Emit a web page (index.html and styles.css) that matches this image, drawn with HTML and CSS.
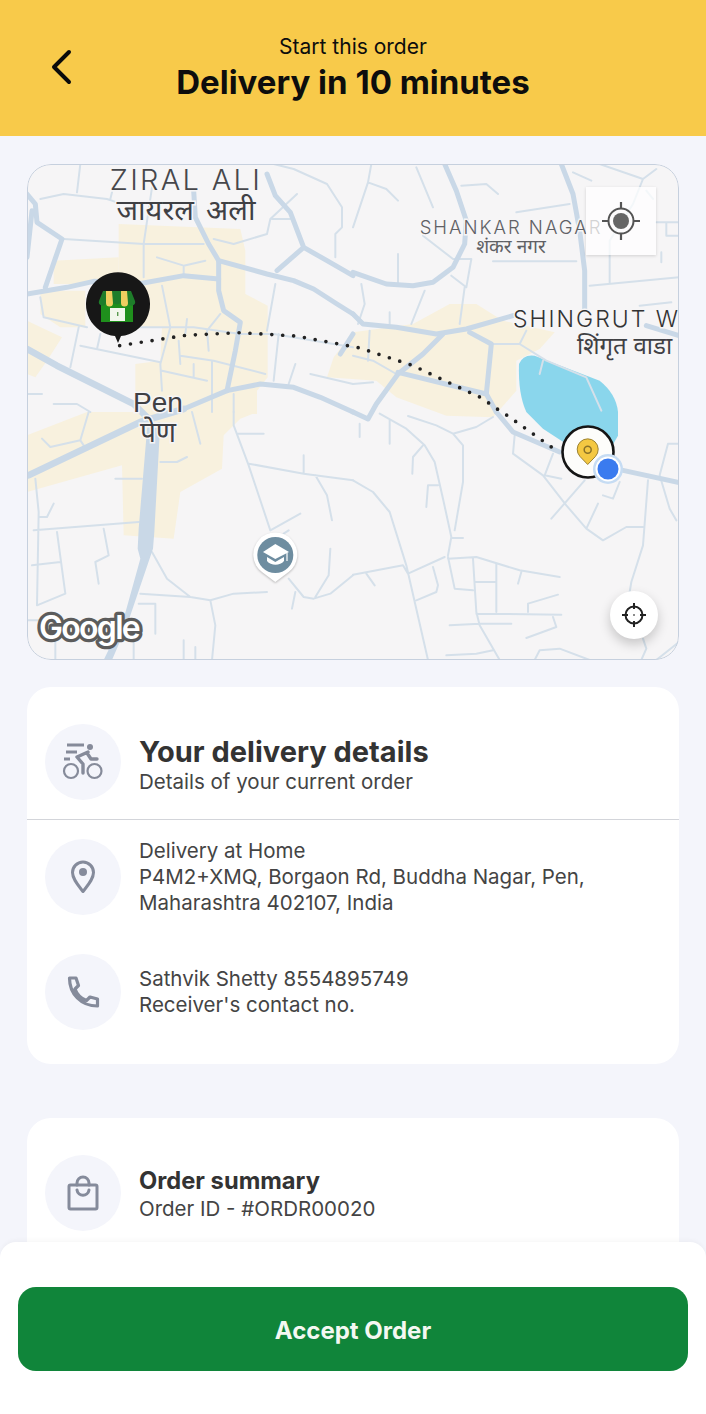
FILE: index.html
```html
<!DOCTYPE html>
<html lang="en">
<head>
<meta charset="utf-8">
<title>Delivery</title>
<link rel="stylesheet" href="styles.css">
</head>
<body>
<div class="screen">
  <header class="topbar">
    <svg class="back" viewBox="0 0 24 36" width="24" height="36"><path d="M20 3 5 18l15 15" fill="none" stroke="#0b0b0b" stroke-width="4" stroke-linecap="round" stroke-linejoin="round"/></svg>
    <div class="topbar-sub">Start this order</div>
    <div class="topbar-title">Delivery in 10 minutes</div>
  </header>
  <main class="content">
    <section class="map">
      <svg class="map-canvas" viewBox="27 164 652 496" width="652" height="496">
        <rect x="27" y="164" width="652" height="496" fill="#f6f5f6"/>
        <g transform="translate(27 164) scale(.33333)">
          <g class="zone">
            <path d="M275 180 640 195 655 260V390L722 425V640L690 680V750H325L325 600 400 590 405 490H340V360H275Z"/>
            <path d="M0 814 180 744H690L640 764 590 814 585 914 460 984 440 1124 290 1114 285 904 0 984Z"/>
            <path d="M80 290 275 280V360H80ZM40 380H175V490H100L40 450ZM0 470 105 520 60 590 25 640 0 630Z"/>
            <path d="M978 505 1158 480 1268 420H1348L1428 470 1583 505 1538 555 1468 590V680L1398 760 1258 755 1108 700 1048 650 900 640 920 580Z"/>
          </g>
          <path class="water" d="M1476 600Q1488 570 1523 575L1718 650Q1768 690 1773 744V815L1753 850 1618 840 1548 794 1498 744Q1473 690 1476 600Z"/>

          <g class="thin">
            <path d="M160 0 150 85M40 105 110 90 240 105 270 115M255 85 250 105M375 70 350 240V340M110 225 350 240 530 240M390 280 470 305 535 290M470 305V330M560 225 620 240 720 210 730 165 810 90M735 165H790"/>
            <path d="M405 365 430 490 400 600 405 680M40 400 50 460 180 490M155 490 130 610M220 510 210 555M160 545 400 595M340 490 500 490 640 510 740 510 978 550M480 465 475 510M455 530 460 600M460 575 560 590 715 630M500 600V640M405 620 540 650M545 560 540 500 580 450M555 590V744M745 360 720 500M755 510 740 650M805 600 785 660M850 630 978 660M620 690V744M80 720H150L190 744M0 690H45M800 15 900 60 945 130V190L925 210V280M740 0 800 15"/>
          </g>
          <g class="thick">
            <path d="M0 390 120 370 200 352 345 358 470 335 575 345"/>
            <path d="M500 80 505 160 545 240 575 290 720 330 800 350 860 375 930 420 978 450"/>
            <path d="M720 30 745 95 790 145 830 250 750 320M830 250 900 290 978 335"/>
            <path d="M575 290V380L590 440 640 475 625 560 600 680"/>
            <path d="M0 90 25 120 30 175 105 225 55 370M15 140 0 280M940 570 978 510"/>
            <path d="M470 735 600 680 700 660 800 670 880 700 978 744"/>
            <path class="wide" d="M0 555 90 605 320 720 370 770"/>
          </g>

          <g transform="translate(978 0)">
            <g class="thin">
              <path d="M55 0 45 55 0 190M45 55 100 75 135 110M190 10 240 130M325 65 400 60 435 90M490 145 650 120M210 215 300 285H355L340 370 295 335M335 370 320 480M420 292H670M135 270V360M25 360 35 420 15 480M215 380 175 480M110 445V480M50 500 45 590M0 575 60 590 130 630M0 660 60 655"/>
              <path d="M710 365 978 340M770 230V360M660 25 715 50M740 0 870 45 910 15M870 45 840 120 770 230M880 80 900 105M910 175H978M940 175V215H978M925 265V295M860 425 955 415M420 540H500L520 500M500 540 580 590 700 640 745 740M570 590 560 630"/>
            </g>
            <g class="thick">
              <path d="M275 0 310 80 340 170 335 240 300 310 240 355 180 365 100 360 0 325"/>
              <path d="M625 0 660 90 680 200 695 320V440"/>
              <path d="M0 450 30 480 130 490 250 510 340 495 480 455"/>
              <path d="M270 510 210 570 135 630 70 720 45 765 0 744"/>
              <path d="M135 625 400 690M350 505 415 540 400 690 430 744"/>
              <path d="M880 485 978 515"/>
            </g>
          </g>

          <g transform="translate(0 744)">
            <g class="thin">
              <path d="M620 0V40L665 160 730 355M630 65H710M665 155 830 185 978 205M830 130V185M865 190 900 250 915 325M730 355 820 305M770 365 785 355M375 420 420 500 490 555 550 565 620 545 720 540M785 500 830 555 860 560 910 545 978 490M910 410 905 490 865 555M805 540 795 590M340 545 490 555M550 565 565 640 555 744M335 575H385V665"/>
              <path d="M25 200 35 300 30 580M35 315H60L80 275M20 355 335 330M90 360 115 545 30 580M15 460 100 450M230 350 245 430 205 450 215 515M265 200H345M400 150H450L480 135M45 80 70 105 160 85 185 0M160 85 170 100M495 0 520 95M0 625H40M85 690V744M320 680V744M470 685V744M505 705V744"/>
            </g>
            <g class="thick">
              <path class="wide" d="M5 190 340 30 470 -9"/>
            </g>
            <path class="road-fill" d="M362 30H400L382 360 378 410 300 640 255 744H230L290 620 340 440 332 410 335 350Z"/>
          </g>

          <g transform="translate(978 744)">
            <g class="thin">
              <path d="M0 205 60 240 110 300 160 460 225 744M110 25V95M20 35V75M165 12 250 40 300 65 330 100V210L305 355M300 65 370 45 420 15M80 5 160 50 215 100 245 150 270 260 295 375 285 430M210 100 180 135 178 185M255 220H225L220 285M295 378H330M0 488 150 460 165 485 275 435M40 485 65 520M240 465 255 520 250 540 190 565"/>
              <path d="M285 435 305 530 360 535M285 440 370 435 500 475 620 495M360 440 370 600 380 640 440 744M365 510H430M430 455V600M370 605 625 608M505 480 495 515M525 600V575L615 548M290 640 380 635 475 635M520 678 610 645 600 615M280 730 370 725 420 715M545 744 560 715 620 710 710 744"/>
              <path d="M485 70 480 125 570 190 640 280 700 350 750 385 820 345H870M600 125 575 190 625 200M695 205 595 320M735 275 700 350M800 210 780 260 750 250M885 205 870 400 835 510 830 540M945 95 920 190 950 290 970 325M945 95H978M870 680 880 710 865 744M978 690 910 744"/>
            </g>
            <g class="thick">
              <path d="M430 0 480 60 620 120"/>
              <path d="M810 175 978 212"/>
            </g>
          </g>

          <path class="route" d="M278 545 475 514 640 506 806 516 968 546 998 552 1156 604 1364 702 1418 740 1446 758 1580 854"/>
        </g>

        <text class="lbl lbl-lg" x="186" y="190" text-anchor="middle">ZIRAL ALI</text>
        <text class="lbl lbl-hi" x="186" y="220" text-anchor="middle">जायरल अली</text>
        <text class="lbl lbl-md" x="511" y="234" text-anchor="middle">SHANKAR NAGAR</text>
        <text class="lbl lbl-hi-sm" x="511" y="253" text-anchor="middle">शंकर नगर</text>
        <text class="lbl lbl-lg2" x="513" y="327">SHINGRUT W</text>
        <text class="lbl lbl-hi2" x="577" y="354">शिंगृत वाडा</text>
        <text class="lbl lbl-pen" x="158" y="412" text-anchor="middle">Pen</text>
        <text class="lbl lbl-pe" x="158" y="442" text-anchor="middle">पेण</text>

        <g>
          <path d="M118 343 115 336A32 32 0 1 1 121 336Z" fill="#171717"/>
          <rect x="101" y="302" width="32" height="20" fill="#1f8f1c"/>
          <path d="M103 291H131L135 301A3.500 3.500 0 0 1 128 303 5 5 0 0 1 120 303 4 4 0 0 1 114 303 5 5 0 0 1 106 303 3.500 3.500 0 0 1 99 301Z" fill="#1e7d2a"/>
          <path d="M106 291H112L113 303A3.500 3.500 0 0 1 106 303ZM121 291H127L128 303A3.500 3.500 0 0 1 121 303Z" fill="#f0cf60"/>
          <rect x="110" y="308" width="15" height="13" fill="#f2f7ec"/>
          <rect x="117" y="312" width="1.400" height="4" fill="#5a9a50"/>
        </g>
        <g>
          <path d="M275.300 582 262 572A22 22 0 1 1 288.600 572Z" fill="#fff" class="pin-shadow"/>
          <circle cx="275.300" cy="555" r="18" fill="#6e8da0"/>
          <path d="M263 552 275.300 544 289 552 275.300 559Z" fill="#fff"/>
          <path d="M267 557V561C271 566 280 566 284 561V557L275.300 562Z" fill="#fff"/>
          <path d="M287 553V561" stroke="#fff" stroke-width="1.200"/>
        </g>
        <g>
          <circle cx="588" cy="452" r="25.500" fill="#fdfdfb" stroke="#151515" stroke-width="2.600"/>
          <path d="M587.700 464.500 580 456.500A10.500 10.500 0 1 1 595.400 456.500Z" fill="#f4c842" stroke="#9b8230" stroke-width="1"/>
          <circle cx="587.700" cy="449.800" r="3.500" fill="none" stroke="#8a7228" stroke-width="1.500"/>
          <circle cx="608" cy="469" r="15" fill="#c6dcf3"/>
          <circle cx="608" cy="469" r="12.500" fill="#fff"/>
          <circle cx="608" cy="469" r="10.500" fill="#3a7bef"/>
        </g>
        <text class="logo-halo" x="39" y="639">Google</text>
        <text class="logo-fill" x="39" y="639">Google</text>
      </svg>
      <div class="locate-square">
        <svg viewBox="0 0 40 40" width="40" height="40"><circle cx="20" cy="20" r="12.500" fill="none" stroke="#555" stroke-width="2"/><circle cx="20" cy="20" r="8" fill="#666"/><path d="M20 1v7M20 32v7M1 20h7M32 20h7" stroke="#555" stroke-width="2.200"/></svg>
      </div>
      <div class="locate-round">
        <svg viewBox="0 0 26 26" width="26" height="26"><circle cx="13" cy="13" r="8.500" fill="none" stroke="#222" stroke-width="2"/><circle cx="13" cy="13" r="1" fill="#666"/><path d="M13 1v6M13 19v6M1 13h6M19 13h6" stroke="#222" stroke-width="2"/></svg>
      </div>
    </section>

    <section class="card card-delivery">
      <div class="row row-head">
        <div class="icon-circle">
          <svg viewBox="0 0 44 40" width="44" height="40" fill="none" stroke="#868b9a" stroke-width="2.200" stroke-linecap="round" stroke-linejoin="round">
            <circle cx="10" cy="29" r="7"/><circle cx="33.500" cy="29" r="7"/>
            <path d="M6 3H23M5 10H16M3 17H9" stroke-width="3" stroke-linecap="butt"/>
            <circle cx="29" cy="5" r="3" fill="#868b9a" stroke="none"/>
            <path d="M27 10 16 15 22 22V31M26 11 30 17H36" stroke-width="3.400"/>
          </svg>
        </div>
        <div class="row-text row-text-head">
          <h2 class="title">Your delivery details</h2>
          <p class="line">Details of your current order</p>
        </div>
      </div>
      <div class="divider"></div>
      <div class="row row-address">
        <div class="icon-circle">
          <svg viewBox="0 0 28 36" width="28" height="36" fill="none" stroke="#858b9b" stroke-width="3" stroke-linejoin="round"><path d="M14 32.500C9 26 3.500 20 3.500 13.500A10.500 10.500 0 0 1 24.500 13.500C24.500 20 19 26 14 32.500Z"/><circle cx="14" cy="13" r="4" fill="#858b9b" stroke="none"/></svg>
        </div>
        <div class="row-text">
          <p class="line">Delivery at Home</p>
          <p class="line">P4M2+XMQ, Borgaon Rd, Buddha Nagar, Pen,</p>
          <p class="line">Maharashtra 402107, India</p>
        </div>
      </div>
      <div class="row row-contact">
        <div class="icon-circle">
          <svg viewBox="0 0 34 34" width="34" height="34" fill="none" stroke="#858b9b" stroke-width="3.200" stroke-linejoin="round"><path d="M3.500 3H10L12.500 10.500 9 14C11 19.500 15 23.500 20.500 25.500L24 22 31.500 24V31C15 31 3.500 19 3.500 3Z"/></svg>
        </div>
        <div class="row-text">
          <p class="line">Sathvik Shetty 8554895749</p>
          <p class="line">Receiver's contact no.</p>
        </div>
      </div>
    </section>

    <section class="card card-summary">
      <div class="row">
        <div class="icon-circle">
          <svg viewBox="0 0 32 36" width="32" height="36" fill="none" stroke="#858b9b" stroke-width="3" stroke-linecap="round" stroke-linejoin="round"><rect x="2" y="10" width="28" height="24" rx="1.500"/><path d="M10 10V8A6 6 0 0 1 22 8V10M10 15C11 22 21 22 22 15"/></svg>
        </div>
        <div class="row-text row-text-summary">
          <h2 class="title title-sm">Order summary</h2>
          <p class="line">Order ID - #ORDR00020</p>
        </div>
      </div>
    </section>
  </main>
  <footer class="sheet">
    <button class="accept" type="button">Accept Order</button>
  </footer>
</div>
</body>
</html>
```
FILE: styles.css
```css
* { box-sizing: border-box; }
html, body { margin: 0; padding: 0; }
body { font-family: "Inter", "Liberation Sans", sans-serif; background: #f4f5fb; color: #333; }
.screen { position: relative; width: 706px; height: 1414px; overflow: hidden; background: #f4f5fb; }

.topbar { position: relative; height: 136px; background: #f8ca4a; text-align: center; padding-top: 35px; color: #0d0d0d; }
.back { position: absolute; left: 49px; top: 49px; }
.topbar-sub { font-size: 21px; line-height: 24px; }
.topbar-title { font-size: 33px; font-weight: 700; line-height: 46px; }

.content { padding: 28px 27px 0; display: flex; flex-direction: column; }

.map { position: relative; height: 496px; border-radius: 24px; overflow: hidden; }
.map::after { content: ""; position: absolute; inset: 0; border: 1.500px solid #c6d0de; border-radius: 24px; }
.map-canvas { display: block; }

.zone { fill: #f8f1de; }
.water { fill: #8ad6ec; }
.thin, .thick { fill: none; stroke-linejoin: round; stroke-linecap: round; }
.thin { stroke: #d5e0ea; stroke-width: 6px; }
.thick { stroke: #c9d8e7; stroke-width: 15px; }
.thick .wide { stroke-width: 20px; }
.road-fill { fill: #c9d8e7; }
.route { fill: none; stroke: #222; stroke-width: 11px; stroke-linecap: round; stroke-dasharray: 0 32.800; }

.lbl { fill: #3f4044; stroke: #f6f5f6; stroke-width: 3px; paint-order: stroke; font-family: "Inter", "Noto Sans", "Noto Sans Devanagari", "Lohit Devanagari", sans-serif; }
.lbl-lg { font-size: 29px; letter-spacing: 2.300px; font-weight: 300; fill: #46474b; }
.lbl-lg2 { font-size: 23px; letter-spacing: 2px; font-weight: 300; fill: #333; }
.lbl-md { font-size: 18.500px; letter-spacing: 2px; font-weight: 300; fill: #606165; }
.lbl-hi { font-size: 29px; word-spacing: 4px; }
.lbl-hi-sm { font-size: 19px; fill: #606165; }
.lbl-hi2 { font-size: 24px; }
.lbl-pe { font-size: 28px; }
.lbl-pen { font-size: 28px; font-family: "Liberation Sans", sans-serif; }
.pin-shadow { filter: drop-shadow(0 1px 1px rgba(0,0,0,.25)); }
.logo-halo, .logo-fill { font-family: "Inter", "Liberation Sans", sans-serif; font-size: 32px; font-weight: 600; letter-spacing: -1.700px; }
.logo-halo { fill: none; stroke: #5c5c5c; stroke-width: 6.500px; stroke-linejoin: round; }
.logo-fill { fill: #fff; }

.locate-square { position: absolute; left: 559px; top: 23px; width: 70px; height: 68px; background: rgba(255,255,255,.72); box-shadow: 0 1px 3px rgba(0,0,0,.15); display: flex; align-items: center; justify-content: center; }
.locate-round { position: absolute; left: 583px; top: 427px; width: 48px; height: 48px; border-radius: 50%; background: #fff; box-shadow: 0 5px 12px rgba(0,0,0,.2); display: flex; align-items: center; justify-content: center; }

.card { background: #fff; border-radius: 24px; }
.card-delivery { margin-top: 27px; height: 377px; padding-top: 37px; }
.card-summary { margin-top: 54px; padding-top: 37px; height: 200px; }
.row { display: flex; align-items: center; gap: 18px; padding-left: 18px; }
.row-address { margin-top: 18px; }
.row-contact { margin-top: 38px; }
.divider { height: 1px; background: #d3d5da; margin-top: 19px; }
.icon-circle { flex: none; width: 76px; height: 76px; border-radius: 50%; background: #f4f5fb; display: flex; align-items: center; justify-content: center; }
.row-text { flex: 1; min-width: 0; }
.row-text-head { padding-top: 6px; }
.row-text-summary { padding-top: 2px; }
.title { margin: 0; font-size: 29px; font-weight: 700; line-height: 34px; color: #333; }
.title-sm { font-size: 23.700px; line-height: 30px; }
.line { margin: 0; font-size: 20.500px; line-height: 26px; color: #444; }

.sheet { position: absolute; left: 0; right: 0; bottom: 0; height: 172px; background: #fff; border-radius: 16px 16px 0 0; box-shadow: 0 -2px 4px rgba(0,0,0,.03); padding: 45px 18px 0; }
.accept { display: block; width: 100%; height: 84px; padding: 2px 0 0; border: 0; border-radius: 18px; background: #10853a; color: #f4f8f2; font-family: inherit; font-size: 24px; font-weight: 700; }
```
